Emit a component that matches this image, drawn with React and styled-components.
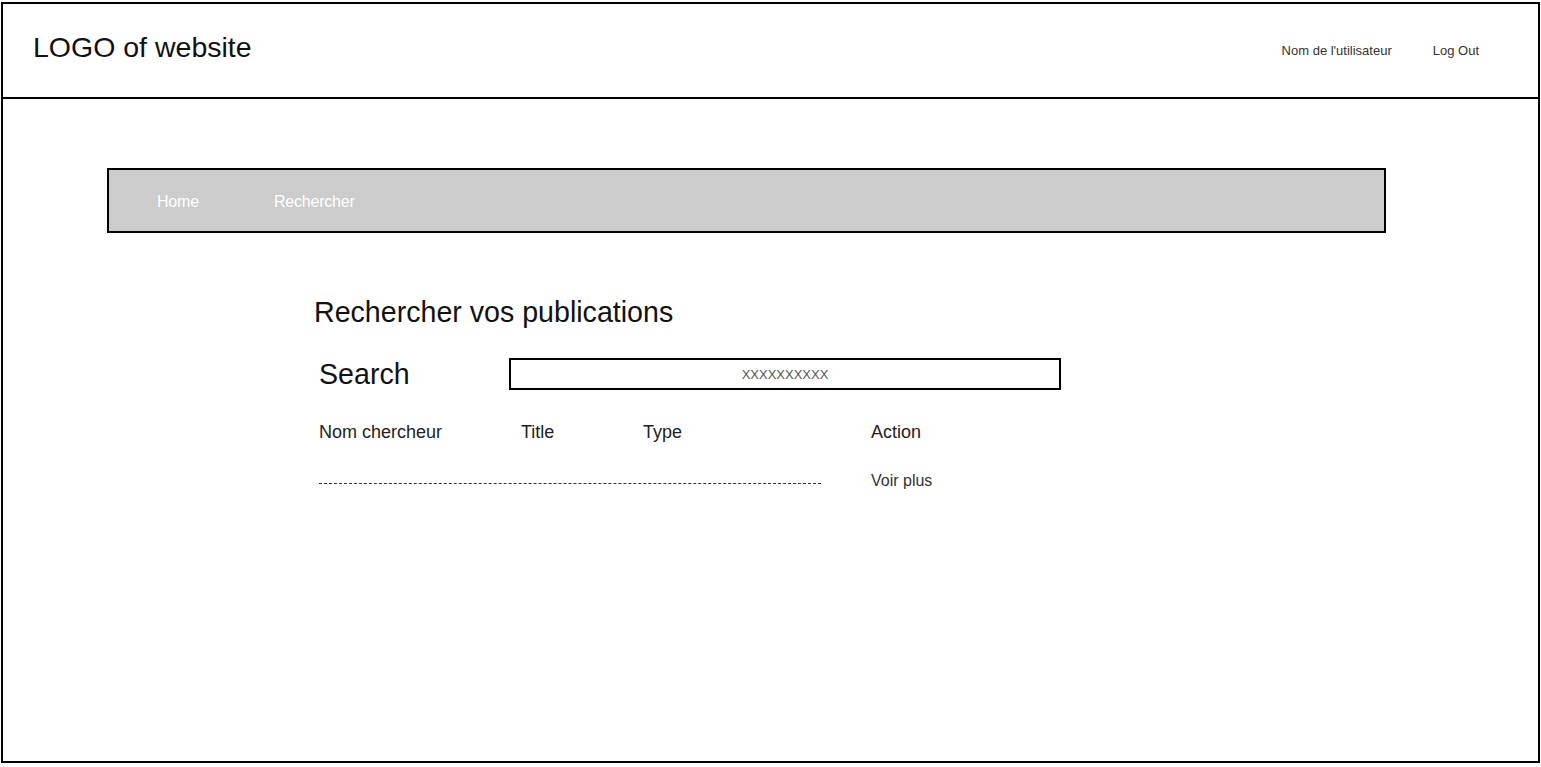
import styled, { createGlobalStyle } from 'styled-components';

const GlobalStyle = createGlobalStyle`
  html, body {
    margin: 0;
    padding: 0;
    background: #fff;
    overflow: hidden;
  }
  body {
    font-family: 'Liberation Sans', Arial, sans-serif;
    color: #111;
  }
`;

const Frame = styled.div`
  margin: 2px 1px 0 1px;
  height: 761px;
  box-sizing: border-box;
  border: 2px solid #000;
  display: flex;
  flex-direction: column;
`;

const Header = styled.header`
  height: 95px;
  flex-shrink: 0;
  box-sizing: border-box;
  border-bottom: 2px solid #000;
  display: flex;
  align-items: center;
  justify-content: space-between;
  padding: 0 59px 0 30px;
`;

const Logo = styled.div`
  font-size: 28.5px;
  color: #111;
  margin-bottom: 7px;
`;

const UserNav = styled.nav`
  display: flex;
  gap: 41px;
  font-size: 13px;
  color: #333;
`;

const Main = styled.main`
  flex: 1;
  padding-top: 69px;
`;

const MenuBar = styled.nav`
  margin-left: 104px;
  width: 1279px;
  height: 65px;
  box-sizing: border-box;
  border: 2px solid #000;
  background: #ccc;
  display: flex;
  align-items: center;
  gap: 75px;
  padding: 2px 0 0 48px;
`;

const MenuLink = styled.a`
  color: #fff;
  font-size: 16px;
  letter-spacing: -0.2px;
  text-decoration: none;
  cursor: pointer;
`;

const Content = styled.section`
  margin-left: 316px;
  padding-top: 63px;
`;

const PageTitle = styled.h1`
  margin: 0 0 0 -5px;
  font-size: 28.6px;
  line-height: 32px;
  font-weight: normal;
  color: #111;
`;

const SearchRow = styled.div`
  display: flex;
  align-items: center;
  margin-top: 30px;
`;

const SearchLabel = styled.label`
  width: 190px;
  font-size: 28.6px;
  line-height: 32px;
  color: #111;
`;

const SearchInput = styled.input`
  width: 552px;
  height: 32px;
  box-sizing: border-box;
  border: 2px solid #000;
  outline: none;
  text-align: center;
  font-family: 'Liberation Sans', Arial, sans-serif;
  font-size: 13px;
  color: #555;
  padding: 0;
  &::placeholder {
    color: #555;
  }
`;

const Table = styled.div`
  display: grid;
  grid-template-columns: 202px 122px 228px auto;
  margin-top: 31px;
`;

const HeadCell = styled.div`
  font-size: 18px;
  line-height: 22px;
  color: #222;
`;

const RowLine = styled.div`
  grid-column: 1 / span 3;
  margin-top: 27px;
  display: flex;
  align-items: center;
`;

const Dashes = styled.div`
  width: 502px;
  border-top: 1px dashed #333;
  margin-top: 6px;
`;

const ActionCell = styled.a`
  font-size: 16px;
  line-height: 20px;
  color: #333;
  margin-top: 28px;
  cursor: pointer;
`;

export default function App() {
  return (
    <>
      <GlobalStyle />
      <Frame>
        <Header>
          <Logo>LOGO of website</Logo>
          <UserNav>
            <span>Nom de l'utilisateur</span>
            <span>Log Out</span>
          </UserNav>
        </Header>
        <Main>
          <MenuBar>
            <MenuLink>Home</MenuLink>
            <MenuLink>Rechercher</MenuLink>
          </MenuBar>
          <Content>
            <PageTitle>Rechercher vos publications</PageTitle>
            <SearchRow>
              <SearchLabel>Search</SearchLabel>
              <SearchInput placeholder="XXXXXXXXXX" />
            </SearchRow>
            <Table>
              <HeadCell>Nom chercheur</HeadCell>
              <HeadCell>Title</HeadCell>
              <HeadCell>Type</HeadCell>
              <HeadCell>Action</HeadCell>
              <RowLine>
                <Dashes />
              </RowLine>
              <ActionCell>Voir plus</ActionCell>
            </Table>
          </Content>
        </Main>
      </Frame>
    </>
  );
}
